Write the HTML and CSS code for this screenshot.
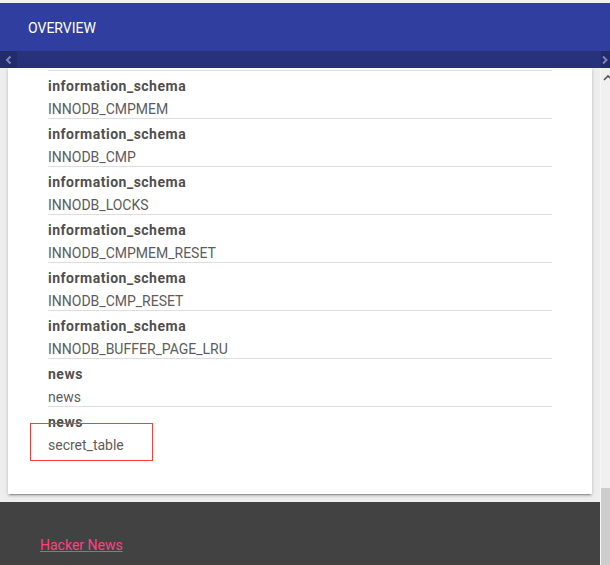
FILE: index.html
```html
<!DOCTYPE html>
<html>
<head>
<meta charset="utf-8">
<link rel="stylesheet" href="styles.css">
</head>
<body>
<div class="topstrip"></div>
<header class="nav">
  <span class="nav-title">OVERVIEW</span>
</header>
<div class="tabbar">
  <div class="tab-btn left">
    <svg width="10" height="10" viewBox="0 0 10 10"><polyline points="6.5,1.5 3,5 6.5,8.5" fill="none" stroke="#7d86b8" stroke-width="2"/></svg>
  </div>
  <div class="tab-fill"></div>
  <div class="tab-btn right">
    <svg width="9" height="10" viewBox="0 0 9 10"><polyline points="2,1.5 5.5,5 2,8.5" fill="none" stroke="#7d86b8" stroke-width="2"/></svg>
  </div>
</div>
<div class="page">
  <div class="main">
    <div class="content">
      <div class="card">
        <div class="item"><div class="db">information_schema</div><div class="tbl">INNODB_CMPMEM</div></div>
        <div class="item"><div class="db">information_schema</div><div class="tbl">INNODB_CMP</div></div>
        <div class="item"><div class="db">information_schema</div><div class="tbl">INNODB_LOCKS</div></div>
        <div class="item"><div class="db">information_schema</div><div class="tbl">INNODB_CMPMEM_RESET</div></div>
        <div class="item"><div class="db">information_schema</div><div class="tbl">INNODB_CMP_RESET</div></div>
        <div class="item"><div class="db">information_schema</div><div class="tbl">INNODB_BUFFER_PAGE_LRU</div></div>
        <div class="item"><div class="db">news</div><div class="tbl">news</div></div>
        <div class="item last"><div class="db">news</div><div class="tbl">secret_table</div></div>
        <div class="highlight"></div>
      </div>
    </div>
    <footer class="footer">
      <a class="footer-link" href="#">Hacker News</a>
    </footer>
  </div>
  <div class="scrollbar">
    <div class="sb-arrow">
      <svg width="9" height="10" viewBox="0 0 9 10"><polyline points="3,8 7,4 9,6" fill="none" stroke="#555" stroke-width="1.6"/></svg>
    </div>
    <div class="sb-track"></div>
    <div class="sb-thumb"></div>
  </div>
</div>
</body>
</html>
```

FILE: styles.css
```css
html, body {
  margin: 0;
  padding: 0;
}
body {
  width: 610px;
  height: 565px;
  overflow: hidden;
  background: #eeeeee;
  font-family: Roboto, "Liberation Sans", Arial, sans-serif;
  display: flex;
  flex-direction: column;
}
.topstrip {
  height: 3px;
  background: #f0f0f0;
}
.nav {
  height: 48px;
  background: #303f9f;
  display: flex;
  align-items: center;
  padding-left: 28px;
  box-sizing: border-box;
}
.nav-title {
  color: #ffffff;
  font-size: 14px;
  line-height: 18px;
  margin-top: 2px;
}
.tabbar {
  height: 17px;
  display: flex;
  background: #28327a;
}
.tab-btn {
  display: flex;
  align-items: center;
  justify-content: center;
  background: #232c6a;
}
.tab-btn.left {
  width: 17px;
}
.tab-btn.right {
  width: 9px;
  justify-content: flex-end;
}
.tab-fill {
  flex: 1;
}
.page {
  flex: 1;
  display: flex;
  min-height: 0;
}
.main {
  flex: 1;
  display: flex;
  flex-direction: column;
}
.content {
  padding: 0 8px 8px 8px;
}
.card {
  position: relative;
  background: #ffffff;
  padding: 2px 40px 40px 40px;
  box-shadow: 0 2px 2px 0 rgba(0,0,0,0.14), 0 1px 5px 0 rgba(0,0,0,0.12), 0 3px 1px -2px rgba(0,0,0,0.2);
}
.item {
  border-top: 1px solid #dddddd;
  padding-top: 6px;
}
.db {
  font-size: 14px;
  line-height: 18px;
  font-weight: bold;
  letter-spacing: 0.5px;
  color: #4f4f4f;
  margin-bottom: 5px;
}
.tbl {
  font-size: 14px;
  line-height: 18px;
  color: #5c5c5c;
}
.highlight {
  position: absolute;
  left: 22px;
  top: 355px;
  width: 121px;
  height: 36px;
  border: 1px solid #ff3b3b;
}
.footer {
  flex: 1;
  background: #424242;
  padding: 33px 0 0 40px;
  box-sizing: border-box;
}
.footer-link {
  color: #ff4081;
  font-size: 14px;
  line-height: 18px;
  text-decoration: underline;
}
.scrollbar {
  width: 9px;
  display: flex;
  flex-direction: column;
  background: #f0f0f0;
  border-left: 1px solid #f7f7f7;
}
.sb-arrow {
  height: 17px;
  display: flex;
  align-items: center;
}
.sb-track {
  height: 403px;
}
.sb-thumb {
  flex: 1;
  background: #cdcdcd;
}
```
